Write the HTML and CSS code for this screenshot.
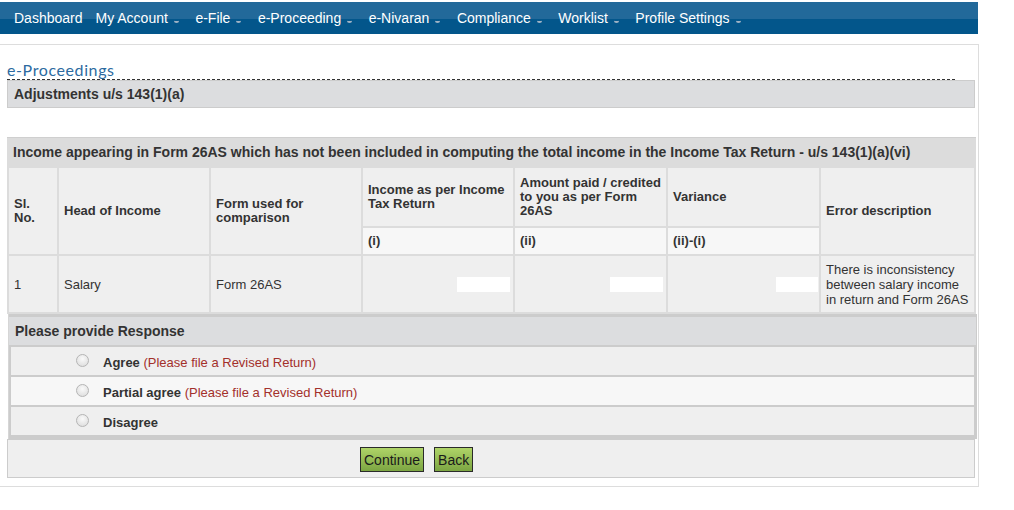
FILE: index.html
```html
<!DOCTYPE html>
<html lang="en">
<head>
    <meta charset="UTF-8">
    <title>e-Proceedings</title>
    <link rel="stylesheet" href="styles.css">
</head>
<body>
    <nav class="topnav">
        <a href="#" class="nav-item">Dashboard</a>
        <a href="#" class="nav-item">My Account <span class="caret"></span></a>
        <a href="#" class="nav-item">e-File <span class="caret"></span></a>
        <a href="#" class="nav-item">e-Proceeding <span class="caret"></span></a>
        <a href="#" class="nav-item">e-Nivaran <span class="caret"></span></a>
        <a href="#" class="nav-item">Compliance <span class="caret"></span></a>
        <a href="#" class="nav-item">Worklist <span class="caret"></span></a>
        <a href="#" class="nav-item">Profile Settings <span class="caret"></span></a>
    </nav>

    <div class="page">
        <h2 class="page-title">e-Proceedings</h2>
        <div class="subhead">Adjustments u/s 143(1)(a)</div>

        <div class="grid-box">
            <div class="grid-title">Income appearing in Form 26AS which has not been included in computing the total income in the Income Tax Return - u/s 143(1)(a)(vi)</div>
            <table class="grid">
                <colgroup>
                    <col style="width:48px">
                    <col style="width:150px">
                    <col style="width:150px">
                    <col style="width:150px">
                    <col style="width:151px">
                    <col style="width:151px">
                    <col style="width:153px">
                </colgroup>
                <tr class="head-row">
                    <th rowspan="2">Sl.<br>No.</th>
                    <th rowspan="2">Head of Income</th>
                    <th rowspan="2">Form used for comparison</th>
                    <th>Income as per Income Tax Return</th>
                    <th>Amount paid / credited to you as per Form 26AS</th>
                    <th>Variance</th>
                    <th rowspan="2">Error description</th>
                </tr>
                <tr class="sub-row">
                    <th>(i)</th>
                    <th>(ii)</th>
                    <th>(ii)-(i)</th>
                </tr>
                <tr class="data-row">
                    <td>1</td>
                    <td>Salary</td>
                    <td>Form 26AS</td>
                    <td class="amount"><span class="masked"></span></td>
                    <td class="amount"><span class="masked"></span></td>
                    <td class="amount"><span class="masked short"></span></td>
                    <td>There is inconsistency between salary income in return and Form 26AS</td>
                </tr>
            </table>
        </div>

        <div class="response-box">
            <div class="response-title">Please provide Response</div>
            <label class="option">
                <span class="radio"></span>
                <b>Agree</b>&nbsp;<span class="note">(Please file a Revised Return)</span>
            </label>
            <label class="option alt">
                <span class="radio"></span>
                <b>Partial agree</b>&nbsp;<span class="note">(Please file a Revised Return)</span>
            </label>
            <label class="option">
                <span class="radio"></span>
                <b>Disagree</b>
            </label>
        </div>

        <div class="actions">
            <button class="btn">Continue</button>
            <button class="btn">Back</button>
        </div>
    </div>
</body>
</html>
```

FILE: styles.css
```css
body {
    margin: 0;
    font-family: "Liberation Sans", Arial, sans-serif;
    color: #333333;
    background: #ffffff;
}
.topnav {
    display: flex;
    align-items: center;
    width: 970px;
    height: 32px;
    margin-top: 2px;
    padding-left: 8px;
    background: linear-gradient(#22699a 0, #22699a 17px, #03568b 17px, #03568b 100%);
}
.nav-item {
    display: flex;
    align-items: center;
    color: #ffffff;
    font-size: 14px;
    text-decoration: none;
    padding: 0 6px;
    margin-right: 1px;
}
.caret {
    display: inline-block;
    width: 5px;
    height: 2px;
    margin: 6px 3.5px 0 6px;
    border-bottom: 2px solid #9fb3c5;
    border-radius: 0 0 3px 3px;
}
.page {
    width: 968px;
    margin-top: 10px;
    padding: 0 3px 8px 7px;
    border: 1px solid #dddddd;
    border-left: none;
}
.page-title {
    margin: 15px 0 0;
    width: 948px;
    font-family: Lato, "Open Sans", sans-serif;
    font-weight: normal;
    font-size: 16px;
    letter-spacing: 0.6px;
    line-height: 19px;
    color: #2c6aa0;
    border-bottom: 1px dashed #333333;
}
.subhead {
    height: 26px;
    line-height: 26px;
    padding-left: 6px;
    font-size: 14px;
    font-weight: bold;
    background: #dcdddf;
    border: 1px solid #cccccc;
}
.grid-box {
    margin-top: 29px;
    width: 969px;
    background: #dcdcdc;
}
.grid-title {
    height: 28px;
    line-height: 28px;
    padding-left: 6px;
    font-size: 14px;
    font-weight: bold;
    border-top: 1px solid #cfcfcf;
}
.grid {
    table-layout: fixed;
    border-spacing: 2px;
    width: 969px;
    font-size: 13px;
}
.grid th, .grid td {
    background: #efefef;
    padding: 0 5px;
    text-align: left;
    vertical-align: middle;
}
.grid th {
    line-height: 14px;
}
.head-row th {
    height: 58px;
}
.sub-row th {
    height: 26px;
    background: #f7f7f7;
}
.data-row td {
    height: 56px;
    line-height: 15px;
}
.grid td.amount {
    text-align: right;
    padding-right: 3px;
}
.masked {
    display: inline-block;
    width: 53px;
    height: 15px;
    margin-top: 1px;
    background: #ffffff;
    vertical-align: middle;
}
.masked.short {
    width: 42px;
    margin-right: -2px;
}
.response-box {
    width: 965px;
    margin-left: 1px;
    padding: 3px 3px 3px 0;
    background: #cccccc;
    border-left: 1px solid #d6d6d6;
}
.response-title {
    height: 28px;
    line-height: 28px;
    padding-left: 6px;
    font-size: 14px;
    font-weight: bold;
    background: #dcdddf;
    margin-bottom: 2px;
    margin-right: -2px;
}
.option {
    display: flex;
    align-items: center;
    box-sizing: border-box;
    height: 28px;
    margin: 0 0 2px 2px;
    padding: 3px 0 0 65px;
    font-size: 13px;
    background: #efefef;
}
.option:last-child {
    margin-bottom: 1px;
}
.option.alt {
    background: #f7f7f7;
}
.radio {
    display: inline-block;
    width: 11px;
    height: 11px;
    margin: -4px 14px 0 0;
    border: 1px solid #b5b5b5;
    border-radius: 50%;
    background: radial-gradient(circle at 50% 35%, #fafafa, #d9d9d9);
}
.option b {
    color: #333333;
}
.note {
    color: #a3302b;
}
.actions {
    height: 39px;
    width: 968px;
    display: flex;
    align-items: center;
    background: #efefef;
    border: 1px solid #cccccc;
    box-sizing: border-box;
    padding: 2px 0 0 352px;
    gap: 10px;
}
.btn {
    height: 25px;
    padding: 0 3px;
    font-family: "Liberation Sans", Arial, sans-serif;
    font-size: 14px;
    color: #1a1a1a;
    background: linear-gradient(#afd468, #7ca542);
    border: 1px solid #2a2a2a;
    border-radius: 0;
    cursor: pointer;
}
```
